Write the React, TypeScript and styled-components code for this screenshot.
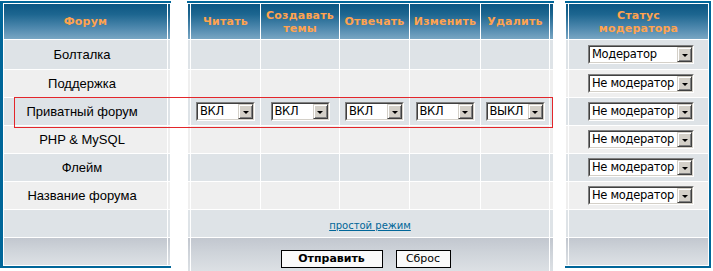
import React from 'react';
import styled, { createGlobalStyle } from 'styled-components';

const Colors = {
    border: '#006699',
    head: '#FFA34F',
    row1: '#DEE3E7',
    row2: '#EFEFEF',
    link: '#006699',
    mark: '#e3262b',
};

type Tone = 'row1' | 'row2' | 'head' | 'bottom';

const toneBg: Record<Tone, string> = {
    row1: Colors.row1,
    row2: Colors.row2,
    head: 'linear-gradient(to bottom, #0b5682 0%, #1d6690 30%, #4a85ab 65%, #78a6c3 100%)',
    bottom: 'linear-gradient(to bottom, #c2c7cf 0%, #cfd4da 45%, #dde1e5 100%)',
};

type Forum = { name: string; status: string; perms?: string[] };

const forums: Forum[] = [
    { name: 'Болталка', status: 'Модератор' },
    { name: 'Поддержка', status: 'Не модератор' },
    { name: 'Приватный форум', status: 'Не модератор', perms: ['ВКЛ', 'ВКЛ', 'ВКЛ', 'ВКЛ', 'ВЫКЛ'] },
    { name: 'PHP & MySQL', status: 'Не модератор' },
    { name: 'Флейм', status: 'Не модератор' },
    { name: 'Название форума', status: 'Не модератор' },
];

const permCols = [
    { title: 'Читать', width: 69 },
    { title: 'Создавать\nтемы', width: 78 },
    { title: 'Отвечать', width: 69 },
    { title: 'Изменить', width: 70 },
    { title: 'Удалить', width: 68 },
];

const tone = (i: number): Tone => (i % 2 === 0 ? 'row1' : 'row2');
const rowH = (i: number) => (i === 0 ? 29 : 27);

function App() {
    return (
        <>
            <GlobalStyle />
            <Board>
                <ForumPanel />
                <PermPanel />
                <StatusPanel />
                <Highlight />
            </Board>
        </>
    );
}

//#region Panels
function ForumPanel() {
    return (
        <Panel $w={171} $left={3}>
            <colgroup>
                <Col $w={163} />
                <Col $w={2} />
            </colgroup>
            <tbody>
                <tr>
                    <Th $h={35}>Форум</Th>
                    <Th $h={35} />
                </tr>
                {forums.map((f, i) => (
                    <tr key={f.name}>
                        <NameCell $tone={tone(i)} $h={rowH(i)}>
                            {f.name}
                        </NameCell>
                        <Cell $tone={tone(i)} $h={rowH(i)} />
                    </tr>
                ))}
                <tr>
                    <Cell $tone="row1" $h={27} />
                    <Cell $tone="row1" $h={27} />
                </tr>
                <tr>
                    <Cell $tone="bottom" $h={27} />
                    <Cell $tone="bottom" $h={27} />
                </tr>
            </tbody>
        </Panel>
    );
}

function PermPanel() {
    return (
        <Panel $w={367} $gap={16}>
            <colgroup>
                <Col $w={2} />
                {permCols.map((c) => (
                    <Col key={c.title} $w={c.width} />
                ))}
                <Col $w={3} />
            </colgroup>
            <tbody>
                <tr>
                    <Th $h={35} />
                    {permCols.map((c) => (
                        <Th key={c.title} $h={35}>
                            {c.title.split('\n').map((line, k) => (
                                <React.Fragment key={k}>
                                    {k > 0 && <br />}
                                    {line}
                                </React.Fragment>
                            ))}
                        </Th>
                    ))}
                    <Th $h={35} />
                </tr>
                {forums.map((f, i) => (
                    <tr key={f.name}>
                        <Cell $tone={tone(i)} $h={rowH(i)} />
                        {permCols.map((c, k) => (
                            <Cell key={c.title} $tone={tone(i)} $h={rowH(i)}>
                                {f.perms && <Select value={f.perms[k]} width={59} />}
                            </Cell>
                        ))}
                        <Cell $tone={tone(i)} $h={rowH(i)} />
                    </tr>
                ))}
                <tr>
                    <Cell $tone="row1" $h={27} />
                    <Cell $tone="row1" $h={27} colSpan={5}>
                        <ModeLink href="#">простой режим</ModeLink>
                    </Cell>
                    <Cell $tone="row1" $h={27} />
                </tr>
                <tr>
                    <Cell $tone="bottom" $h={27} />
                    <ButtonCell $tone="bottom" $h={27} colSpan={5}>
                        <ButtonRow>
                            <MainButton type="button">Отправить</MainButton>
                            <LiteButton type="button">Сброс</LiteButton>
                        </ButtonRow>
                    </ButtonCell>
                    <Cell $tone="bottom" $h={27} />
                </tr>
            </tbody>
        </Panel>
    );
}

function StatusPanel() {
    return (
        <Panel $w={146} $gap={11} $right={2}>
            <colgroup>
                <Col $w={2} />
                <Col $w={139} />
            </colgroup>
            <tbody>
                <tr>
                    <Th $h={35} />
                    <Th $h={35}>
                        Статус
                        <br />
                        модератора
                    </Th>
                </tr>
                {forums.map((f, i) => (
                    <tr key={f.name}>
                        <Cell $tone={tone(i)} $h={rowH(i)} />
                        <StatusCell $tone={tone(i)} $h={rowH(i)}>
                            <Select value={f.status} width={106} />
                        </StatusCell>
                    </tr>
                ))}
                <tr>
                    <Cell $tone="row1" $h={27} />
                    <Cell $tone="row1" $h={27} />
                </tr>
                <tr>
                    <Cell $tone="bottom" $h={27} />
                    <Cell $tone="bottom" $h={27} />
                </tr>
            </tbody>
        </Panel>
    );
}

function Select({ value, width }: { value: string; width: number }) {
    return (
        <SelectFrame $w={width}>
            <SelectInner>
                <SelectValue>{value}</SelectValue>
                <SelectArrow />
            </SelectInner>
        </SelectFrame>
    );
}
//#endregion

//#region Styles
const GlobalStyle = createGlobalStyle`
    html, body {
        margin: 0;
        padding: 0;
        background: #fff;
    }
    body {
        font-family: 'DejaVu Sans', Verdana, sans-serif;
    }
`;

const Board = styled.div`
    position: relative;
    display: flex;
    align-items: flex-start;
    width: 713px;
    padding-top: 1px;
`;

const Panel = styled.table<{ $w: number; $gap?: number; $left?: number; $right?: number }>`
    flex: none;
    width: ${(p) => p.$w}px;
    margin-left: ${(p) => p.$gap ?? 0}px;
    table-layout: fixed;
    border-collapse: separate;
    border-spacing: 1px;
    background: #fff;
    border-top: 2px solid ${Colors.border};
    border-bottom: 2px solid ${Colors.border};
    border-left: ${(p) => p.$left ?? 0}px solid ${Colors.border};
    border-right: ${(p) => p.$right ?? 0}px solid ${Colors.border};
`;

const Col = styled.col<{ $w: number }>`
    width: ${(p) => p.$w}px;
`;

const Th = styled.th<{ $h: number }>`
    height: ${(p) => p.$h}px;
    padding: 0;
    background: ${toneBg.head};
    color: ${Colors.head};
    font: bold 11px/13px 'DejaVu Sans', Verdana, sans-serif;
    letter-spacing: 0.2px;
    text-align: center;
    vertical-align: middle;
    white-space: nowrap;
`;

const Cell = styled.td<{ $tone: Tone; $h: number }>`
    height: ${(p) => p.$h}px;
    padding: 0;
    background: ${(p) => toneBg[p.$tone]};
    text-align: center;
    vertical-align: middle;
    line-height: 0;
`;

const NameCell = styled(Cell)`
    padding-right: 7px;
    color: #000;
    font: 13px/16px 'Liberation Sans', Arial, sans-serif;
`;

const StatusCell = styled(Cell)`
    padding-left: 5px;
`;

const ButtonCell = styled(Cell)`
    padding-top: 7px;
`;

const ModeLink = styled.a`
    color: ${Colors.link};
    font: 10px/13px 'DejaVu Sans', Verdana, sans-serif;
    text-decoration: underline;
    position: relative;
    top: 2px;
`;

const ButtonRow = styled.div`
    display: flex;
    justify-content: center;
    gap: 13px;
    padding-right: 9px;
`;

const MainButton = styled.button`
    box-sizing: border-box;
    width: 102px;
    height: 18px;
    padding: 0;
    background: #fafafa;
    border: 1px solid #000;
    color: #000;
    font: bold 11px/14px 'DejaVu Sans', Verdana, sans-serif;
`;

const LiteButton = styled(MainButton)`
    width: 55px;
    font-weight: normal;
`;

const SelectFrame = styled.span<{ $w: number }>`
    display: inline-block;
    box-sizing: border-box;
    width: ${(p) => p.$w}px;
    height: 19px;
    vertical-align: middle;
    border: 1px solid;
    border-color: #808080 #ffffff #ffffff #808080;
`;

const SelectInner = styled.span`
    display: flex;
    align-items: center;
    box-sizing: border-box;
    height: 100%;
    border: 1px solid;
    border-color: #404040 #d4d0c8 #d4d0c8 #404040;
    background: #fff;
`;

const SelectValue = styled.span`
    flex: 1;
    min-width: 0;
    padding-left: 2px;
    overflow: hidden;
    white-space: nowrap;
    text-align: left;
    color: #000;
    font: 11.5px/15px 'DejaVu Sans', Verdana, sans-serif;
    letter-spacing: -0.3px;
`;

const SelectArrow = styled.span`
    display: flex;
    align-items: center;
    justify-content: center;
    flex: none;
    box-sizing: border-box;
    width: 15px;
    height: 15px;
    background: #d4d0c8;
    border: 1px solid;
    border-color: #d4d0c8 #404040 #404040 #d4d0c8;
    box-shadow: inset 1px 1px 0 #fff, inset -1px -1px 0 #808080;

    &::after {
        content: '';
        border-left: 3px solid transparent;
        border-right: 3px solid transparent;
        border-top: 3px solid #000;
        margin-top: 1px;
    }
`;

const Highlight = styled.div`
    position: absolute;
    left: 14px;
    top: 97px;
    width: 539px;
    height: 31px;
    box-sizing: border-box;
    border: 1px solid ${Colors.mark};
    pointer-events: none;
`;
//#endregion

export default App;
